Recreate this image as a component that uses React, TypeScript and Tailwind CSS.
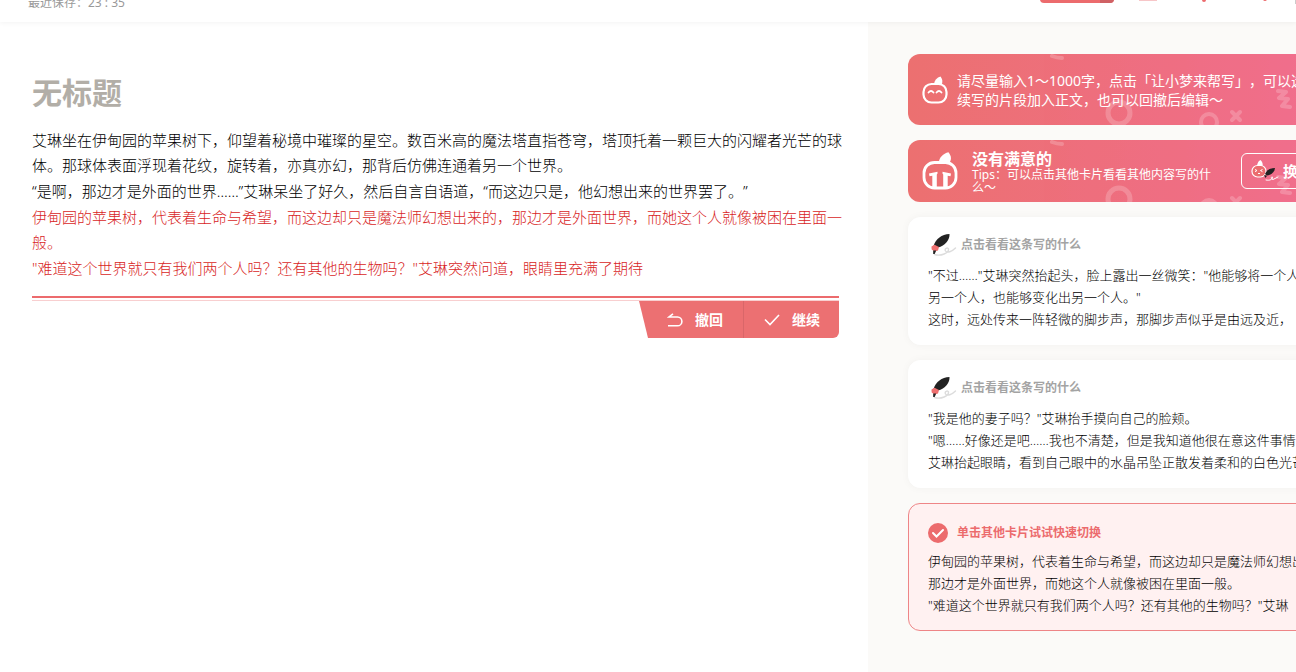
import { useState } from 'react';

interface Card {
  id: number;
  lines: string[];
}

const story = [
  '艾琳坐在伊甸园的苹果树下，仰望着秘境中璀璨的星空。数百米高的魔法塔直指苍穹，塔顶托着一颗巨大的闪耀者光芒的球体。那球体表面浮现着花纹，旋转着，亦真亦幻，那背后仿佛连通着另一个世界。',
  '“是啊，那边才是外面的世界……”艾琳呆坐了好久，然后自言自语道，“而这边只是，他幻想出来的世界罢了。”',
];

const generated = [
  '伊甸园的苹果树，代表着生命与希望，而这边却只是魔法师幻想出来的，那边才是外面世界，而她这个人就像被困在里面一般。',
  '"难道这个世界就只有我们两个人吗？还有其他的生物吗？"艾琳突然问道，眼睛里充满了期待',
];

const cards: Card[] = [
  {
    id: 1,
    lines: [
      '"不过……"艾琳突然抬起头，脸上露出一丝微笑："他能够将一个人',
      '另一个人，也能够变化出另一个人。"',
      '这时，远处传来一阵轻微的脚步声，那脚步声似乎是由远及近，',
    ],
  },
  {
    id: 2,
    lines: [
      '"我是他的妻子吗？"艾琳抬手摸向自己的脸颊。',
      '"嗯……好像还是吧……我也不清楚，但是我知道他很在意这件事情',
      '艾琳抬起眼睛，看到自己眼中的水晶吊坠正散发着柔和的白色光芒',
    ],
  },
  {
    id: 3,
    lines: [
      '伊甸园的苹果树，代表着生命与希望，而这边却只是魔法师幻想出',
      '那边才是外面世界，而她这个人就像被困在里面一般。',
      '"难道这个世界就只有我们两个人吗？还有其他的生物吗？"艾琳',
    ],
  },
];

function SmileBot() {
  return (
    <svg width="26" height="28" viewBox="0 0 26 28" fill="none" className="shrink-0">
      <rect x="1.5" y="8" width="23" height="18.5" rx="8" stroke="#fff" strokeWidth="2.2" />
      <path d="M12 8C12.5 4 15 1.5 18.5 .5C20.5 3 21 6 19.5 9Z" fill="#fff" />
      <path d="M6.5 16.5q2.5-3 5 0M14.5 16.5q2.5-3 5 0" stroke="#fff" strokeWidth="1.8" strokeLinecap="round" />
    </svg>
  );
}

function CryBot() {
  return (
    <svg width="36" height="38" viewBox="0 0 36 38" fill="none" className="shrink-0">
      <rect x="2" y="10.5" width="32" height="25.5" rx="10.5" stroke="#fff" strokeWidth="2.8" />
      <path d="M16.5 11C17.5 5 21 1.5 26.5 .2C29.5 4 30 8 26.5 12Z" fill="#fff" />
      <path d="M7 21.5L15.5 19.8V21.5L14.8 22.5V35H10.3V23.8L7.5 24.2zM29 21.5L20.5 19.8V21.5L21.2 22.5V35H25.7V23.8L28.5 24.2z" fill="#fff" />
    </svg>
  );
}

function Quill() {
  return (
    <svg width="27" height="24" viewBox="0 0 27 24" fill="none" className="shrink-0">
      <path d="M4.5 21.5C11 23.5 19 20 18.5 16C18 14 14 15.5 15.5 18C17 20.5 22 18.5 25.5 15" stroke="#dcdcdc" strokeWidth="1.4" strokeLinecap="round" />
      <path d="M3.5 13C6 5.5 11.5 1.5 19.5 1C20 6.5 15 13 8 14.5Z" fill="#222" />
      <path d="M1.5 13.5l3-1.8 4.5 2.3-1 3.5-3.5 1-2.8-2z" fill="#ee7070" />
      <path d="M3.2 17.5h3l-1.5 3.5h-1.5z" fill="#222" />
    </svg>
  );
}

function SwapBot() {
  return (
    <svg width="28" height="24" viewBox="0 0 28 24" fill="none" className="shrink-0">
      <rect x="1" y="6.5" width="14" height="11.5" rx="5.5" fill="#ec6d70" stroke="#fff" strokeWidth="1.2" />
      <path d="M6 6.5C6.5 3.5 8 1.5 9.5 1C11.5 3 12 5 11.5 7Z" fill="#fff" />
      <path d="M4 10.5l2 1-2 1.2M11.5 10.5l-2 1 2 1.2M7 14.5h2" stroke="#fff" />
      <path d="M14 15C15.5 11.5 19 9 24 9C23.5 13 20.5 16 16 16.5Z" fill="#222" />
      <path d="M13 16l3 .8-1.5 2.2z" fill="#222" />
      <path d="M15 21C19 22 22 20 21.5 18C20 17.5 19.5 20 22 20.5L27 18" stroke="#fff" strokeLinecap="round" />
    </svg>
  );
}

function Confetti() {
  return (
    <svg width="453" height="71" viewBox="0 0 453 71" fill="none" stroke="#fff" className="absolute left-0 top-0 opacity-20">
      <path d="M144 2q5 2 10 2" strokeWidth="4" strokeLinecap="round" />
      <circle cx="211" cy="59" r="11" strokeWidth="5" />
      <circle cx="301" cy="68" r="8" strokeWidth="4" />
      <path d="M324 58l8 8M332 58l-8 8" strokeWidth="4" strokeLinecap="round" />
      <path d="M370 37l8 1-7 6 9 1-6 7 8 1" strokeWidth="4" strokeLinecap="round" strokeLinejoin="round" />
    </svg>
  );
}

export default function App() {
  const [selected, setSelected] = useState(3);
  const [title, setTitle] = useState('');

  return (
    <div className="flex min-h-screen flex-col overflow-hidden bg-white font-['Noto_Sans','Noto_Sans_CJK_SC',sans-serif] text-black [text-spacing-trim:space-all]">
      {/* Header */}
      <header className="z-10 flex h-[22px] items-end justify-between overflow-hidden bg-white pb-[10px] pl-7 shadow-[0_1px_5px_rgba(0,0,0,0.05)]">
        <span className="text-xs leading-[18px] text-[#999]">最近保存：23 : 35</span>
        <svg width="256" height="12" viewBox="0 0 256 12" fill="none">
          <path d="M0-10H74V-1Q74 3 70 3H4Q0 3 0-1Z" fill="#ec6b6d" />
          <path d="M60-10H74V-1Q74 3 70 3H60Z" fill="#cf6164" />
          <path d="M99 0H117" stroke="#f7c6c8" strokeWidth="2" />
          <circle cx="164" cy="0" r="2" fill="#ec6b6d" />
          <circle cx="225" cy="-1" r="2" fill="#ec6b6d" />
          <path d="M255.5 0V4" stroke="#ccc" />
        </svg>
      </header>

      <div className="flex flex-1">
        {/* Editor */}
        <main className="min-w-0 flex-1 pl-8 pr-6 pt-12">
          <input
            aria-label="标题"
            value={title}
            onChange={(e) => setTitle(e.target.value)}
            placeholder="无标题"
            className="block h-11 w-full text-[30px] font-bold text-[#b2aea7] outline-none placeholder:text-[#b2aea7]"
          />
          <div className="mt-[14px] flex flex-col gap-px text-[15px] font-light leading-[25px]">
            {story.map((text) => (
              <p key={text}>{text}</p>
            ))}
            {generated.map((text) => (
              <p key={text} className="text-[#d81e1e]">{text}</p>
            ))}
          </div>
          <div className="mr-[5px] mt-[15px] flex flex-col border-t-2 border-[#ec6b6d] pt-[2px]">
            <div className="flex justify-end border-t border-[#f8cfd0]">
              <div className="flex h-[37px] overflow-hidden rounded-br-md bg-[#ec7072] text-sm font-bold text-white [clip-path:polygon(0_0,100%_0,100%_100%,9px_100%)]">
                <button className="flex w-[105px] items-center gap-3 border-r border-[#d96669] pl-7">
                  <svg width="16" height="14" viewBox="0 0 16 14" fill="none" stroke="#fff" strokeWidth="1.6">
                    <path d="M6 .8L2 4H10.5a4.3 4.3 0 0 1 0 8.8H1" />
                  </svg>
                  撤回
                </button>
                <button className="flex w-[95px] items-center gap-3 pl-5">
                  <svg width="16" height="12" viewBox="0 0 16 12" fill="none" stroke="#fff" strokeWidth="1.6">
                    <path d="M1 5.5l5 5L15 1" />
                  </svg>
                  继续
                </button>
              </div>
            </div>
          </div>
        </main>

        {/* Suggestions */}
        <aside className="w-[428px] shrink-0 overflow-hidden bg-[#fbfaf8] pl-10 pt-8">
          <div className="flex w-[453px] flex-col gap-[15px]">
            <div className="relative flex h-[71px] items-center gap-[9px] overflow-hidden rounded-xl bg-linear-to-r from-[#ec7070] to-[#f16e90] pl-[14px] text-white">
              <Confetti />
              <SmileBot />
              <p className="whitespace-nowrap text-sm leading-[19px]">
                请尽量输入1～1000字，点击「让小梦来帮写」，可以选
                <br />
                续写的片段加入正文，也可以回撤后编辑～
              </p>
            </div>

            <div className="relative flex h-[62px] items-center overflow-hidden rounded-xl bg-linear-to-r from-[#ec7070] to-[#f16e90] pl-[14px] text-white">
              <Confetti />
              <CryBot />
              <div className="ml-[14px] w-[244px] pt-[2px]">
                <h2 className="text-base font-bold leading-[18px]">没有满意的</h2>
                <p className="text-xs leading-[13px]">Tips：可以点击其他卡片看看其他内容写的什么～</p>
              </div>
              <button className="ml-[25px] flex h-9 w-[106px] items-center gap-1 rounded-md border border-white pl-[9px] text-[15px] font-bold">
                <SwapBot />
                换
              </button>
            </div>

            {cards.map((card) => {
              const active = card.id === selected;
              return (
                <button
                  key={card.id}
                  onClick={() => setSelected(card.id)}
                  className={`flex h-32 flex-col rounded-xl border px-[19px] pt-[15px] text-left ${
                    active ? 'border-[#ee8587] bg-[#fff1f1]' : 'border-white bg-white shadow-[0_0_8px_rgba(0,0,0,0.04)]'
                  }`}
                >
                  {active ? (
                    <span className="flex h-7 items-center gap-[9px] text-xs font-bold text-[#ec6b6d]">
                      <svg width="20" height="20" viewBox="0 0 20 20" fill="none">
                        <circle cx="10" cy="10" r="10" fill="#ec6b6d" />
                        <path d="M5 10l3.5 3.5L15 7" stroke="#fff" strokeWidth="2" strokeLinecap="round" />
                      </svg>
                      单击其他卡片试试快速切换
                    </span>
                  ) : (
                    <span className="mb-1 flex h-6 items-center gap-1 pl-[2px] text-xs font-bold text-[#a3a3a3]">
                      <Quill />
                      点击看看这条写的什么
                    </span>
                  )}
                  <span className="mt-1 flex flex-col gap-px whitespace-nowrap text-[13px] font-light leading-[21px]">
                    {card.lines.map((line) => (
                      <span key={line}>{line}</span>
                    ))}
                  </span>
                </button>
              );
            })}
          </div>
        </aside>
      </div>
    </div>
  );
}
